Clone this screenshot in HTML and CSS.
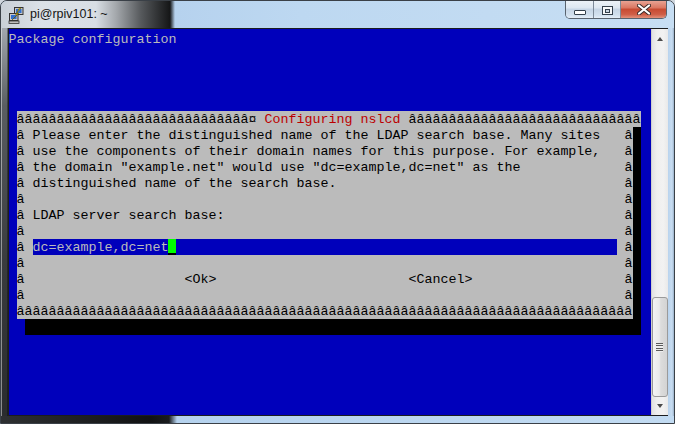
FILE: index.html
```html
<!DOCTYPE html>
<html>
<head>
<meta charset="utf-8">
<title>pi@rpiv101: ~</title>
<link rel="stylesheet" href="styles.css">
</head>
<body>
<div class="window">
  <div class="titlebar">
    <svg class="app-icon" viewBox="0 0 16 18" width="16" height="18">
      <rect x="6.5" y="1.5" width="8.5" height="7" fill="#c8c8c8" stroke="#333" stroke-width="1"/>
      <rect x="8" y="3" width="5.5" height="4" fill="#2f6fcf"/>
      <rect x="1.5" y="7.5" width="8.5" height="7" fill="#c8c8c8" stroke="#333" stroke-width="1"/>
      <rect x="3" y="9" width="5.5" height="4" fill="#2f6fcf"/>
      <rect x="1" y="15" width="10" height="2.5" fill="#bdbdbd" stroke="#333" stroke-width="0.8"/>
      <polygon points="13,2 8.5,7.5 10.5,7.5 4,14 9.5,8.8 7.6,8.8 11.5,2" fill="#ffe21a" stroke="#6b5a00" stroke-width="0.6"/>
    </svg>
    <span class="title">pi@rpiv101: ~</span>
    <div class="controls">
      <div class="btn min"><span class="min-glyph"></span></div>
      <div class="btn max"><span class="max-glyph"><span class="max-inner"></span></span></div>
      <div class="btn close">
        <svg class="close-glyph" viewBox="0 0 14 11" width="14" height="11">
          <path d="M2 1.5 L12 9.5 M12 1.5 L2 9.5" stroke="#3a2a28" stroke-width="4" stroke-linecap="round"/>
          <path d="M2 1.5 L12 9.5 M12 1.5 L2 9.5" stroke="#ffffff" stroke-width="2.2" stroke-linecap="round"/>
        </svg>
      </div>
    </div>
  </div>
  <div class="middle">
    <div class="frame-left"></div>
    <div class="client">
      <div class="terminal">
        <div class="row">Package configuration</div>
        <div class="gap"></div>
        <div class="dialog">
          <div class="row top">âââââââââââââââââââââââââââââ¤ <span class="red">Configuring nslcd</span> âââââââââââââââââââââââââââââ</div>
          <div class="row line"><span>â Please enter the distinguished name of the LDAP search base. Many sites</span><span>â</span></div>
          <div class="row line"><span>â use the components of their domain names for this purpose. For example,</span><span>â</span></div>
          <div class="row line"><span>â the domain "example.net" would use "dc=example,dc=net" as the</span><span>â</span></div>
          <div class="row line"><span>â distinguished name of the search base.</span><span>â</span></div>
          <div class="row line"><span>â</span><span>â</span></div>
          <div class="row line"><span>â LDAP server search base:</span><span>â</span></div>
          <div class="row line"><span>â</span><span>â</span></div>
          <div class="row-plain input-row"><span class="cell">â </span><span class="field"><span class="cell">dc=example,dc=net</span><span class="cursor"></span></span><span class="cell"> â</span></div>
          <div class="row line"><span>â</span><span>â</span></div>
          <div class="row line"><span>â                    &lt;Ok&gt;                        &lt;Cancel&gt;</span><span>â</span></div>
          <div class="row line"><span>â</span><span>â</span></div>
          <div class="row">âââââââââââââââââââââââââââââââââââââââââââââââââââââââââââââââââââââââââââââ</div>
        </div>
      </div>
      <div class="scrollbar">
        <div class="sb-arrow"><span class="tri-up"></span></div>
        <div class="sb-track">
          <div class="thumb"><span class="grip"></span></div>
        </div>
        <div class="sb-arrow"><span class="tri-down"></span></div>
      </div>
    </div>
    <div class="frame-right"></div>
  </div>
  <div class="frame-bottom"></div>
</div>
</body>
</html>
```

FILE: styles.css
```css
* { box-sizing: border-box; margin: 0; padding: 0; }

html, body {
  width: 675px;
  height: 424px;
  overflow: hidden;
}

body {
  background: #cfd6dd;
  font-family: "Liberation Sans", Arial, sans-serif;
}

.window {
  width: 675px;
  height: 424px;
  display: flex;
  flex-direction: column;
  border: 1px solid #3a4047;
  border-radius: 7px 7px 0 0;
  overflow: hidden;
  background: #c2dbf2;
}

/* ---------- title bar ---------- */
.titlebar {
  height: 27px;
  display: flex;
  align-items: flex-start;
  background: linear-gradient(to right, #c9d0d7 0, #dbe1e7 40px, #d8dee4 95px, #a4a8ac 115px, #56595c 140px, #151617 169px, #b6d2ee 174px, #bdd8f1 300px, #c7def3 100%);
}

.app-icon {
  margin: 5px 0 0 7px;
  flex: none;
}

.title {
  margin: 6px 0 0 6px;
  font-size: 12.5px;
  line-height: 14px;
  color: #151515;
  white-space: nowrap;
}

.controls {
  margin-left: auto;
  margin-right: 7px;
  display: flex;
  height: 19px;
  margin-top: -1px;
  border: 1px solid #59636e;
  border-top: none;
  border-radius: 0 0 5px 5px;
  overflow: hidden;
}

.btn {
  display: flex;
  justify-content: center;
  align-items: flex-start;
  background: linear-gradient(#eef3f8, #dde7f1 45%, #c6d5e5 50%, #d3e1ef 85%, #e4edf6);
  border-right: 1px solid #7d8a98;
}

.btn.min { width: 28px; }
.btn.max { width: 27px; }
.btn.close {
  width: 45px;
  border-right: none;
  background: linear-gradient(#eaa99a, #da7560 45%, #c74a31 50%, #cf5e47 80%, #e2917b);
}

.min-glyph {
  margin-top: 10px;
  width: 12px;
  height: 5px;
  background: #ffffff;
  border: 1px solid #34404c;
  border-radius: 1px;
}

.max-glyph {
  margin-top: 6px;
  width: 11px;
  height: 9px;
  border: 1px solid #34404c;
  background: #f6f8fa;
  padding: 2px 2px 1px;
  display: flex;
}

.max-inner {
  flex: 1;
  border: 1px solid #34404c;
  background: #c9d5e1;
}

.close-glyph {
  margin-top: 4px;
}

/* ---------- middle ---------- */
.middle {
  display: flex;
  height: 388px;
}

.frame-left {
  width: 7px;
  background:
    linear-gradient(to right, rgba(255, 255, 255, 0.45) 0 1px, transparent 1px 6px, rgba(0, 0, 0, 0.35) 6px),
    linear-gradient(#a2a8ae, #5a5e62 20%, #3a3c3f 60%, #2a2c2e);
}

.frame-right {
  width: 7px;
  background: linear-gradient(to right, #b8d3ee, #c9ddf1 4px, #98b0c8 6px, #4a5560);
}

.frame-bottom {
  height: 7px;
  background: linear-gradient(to right, #2e3032 0, #111213 150px, #1a1c1e 168px, #b5d2ee 176px, #c2dbf2 100%);
}

.client {
  display: flex;
  width: 660px;
  border: 1px solid #1b1d1f;
  border-right: none;
}

/* ---------- terminal ---------- */
.terminal {
  width: 642px;
  height: 386px;
  padding-top: 2px;
  background: #0000bb;
  color: #bbbbbb;
  font-family: "Liberation Mono", "Courier New", monospace;
  font-size: 13.3333px;
  line-height: 16px;
  overflow: hidden;
}

.row {
  height: 16px;
  padding-top: 1px;
  white-space: pre;
}

.row-plain {
  height: 16px;
  white-space: pre;
}

.cell {
  padding-top: 1px;
  height: 16px;
}

.gap {
  height: 64px;
}

.dialog {
  margin-left: 8px;
  width: 616px;
  background: #bbbbbb;
  color: #000000;
  box-shadow: 8px 16px 0 #000000;
}

.top {
  width: 624px;
  background: #bbbbbb;
}

.red {
  color: #bb0000;
}

.line {
  display: flex;
  justify-content: space-between;
}

.input-row {
  display: flex;
}

.field {
  width: 584px;
  height: 16px;
  display: flex;
  background: #0000bb;
  color: #bbbbbb;
}

.cursor {
  width: 8px;
  height: 16px;
  background: #00ff00;
  border-bottom: 2px solid #000000;
}

/* ---------- scrollbar ---------- */
.scrollbar {
  width: 17px;
  display: flex;
  flex-direction: column;
  background: linear-gradient(to right, #e2e2e2, #efefef 30%, #f2f2f2 70%, #e9e9e9);
  border-left: 1px solid #cfcfcf;
}

.sb-arrow {
  height: 17px;
  display: flex;
  align-items: center;
  justify-content: center;
}

.tri-up {
  margin-top: 3px;
  width: 0;
  height: 0;
  border-left: 3.5px solid transparent;
  border-right: 3.5px solid transparent;
  border-bottom: 4px solid #4a4a4a;
}

.tri-down {
  margin-bottom: 2px;
  width: 0;
  height: 0;
  border-left: 3.5px solid transparent;
  border-right: 3.5px solid transparent;
  border-top: 4px solid #4a4a4a;
}

.sb-track {
  flex: 1;
  display: flex;
  flex-direction: column;
  justify-content: flex-end;
  padding: 0 0 1px 0;
}

.thumb {
  height: 100px;
  border: 1px solid #9a9a9a;
  border-radius: 3px;
  background: linear-gradient(to right, #f4f4f4, #ebebeb 45%, #dcdcdc 55%, #d3d3d3);
  display: flex;
  align-items: center;
  justify-content: center;
}

.grip {
  width: 7px;
  height: 9px;
  background: repeating-linear-gradient(to bottom, #5c5c5c 0 1px, #eeeeee 1px 2.25px);
}
```
